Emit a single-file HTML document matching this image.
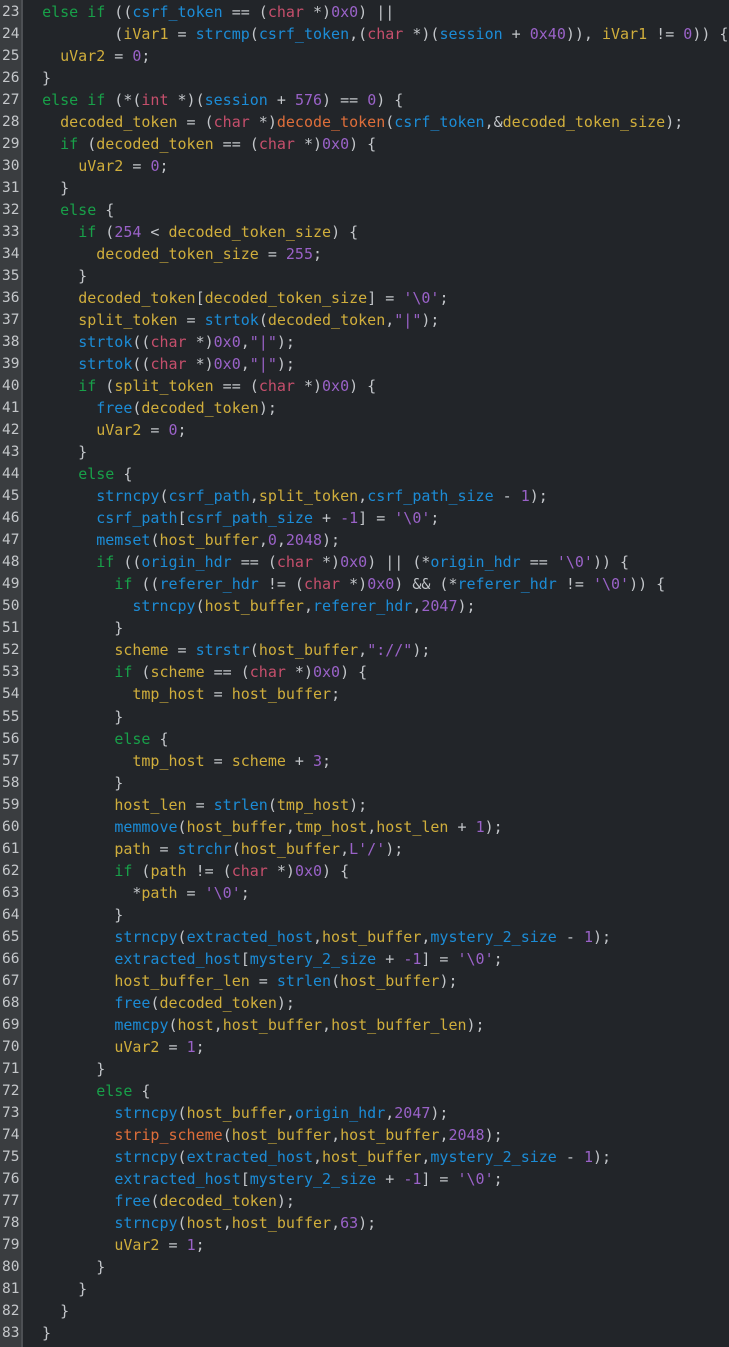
<!DOCTYPE html>
<html><head><meta charset="utf-8"><style>
html,body{margin:0;padding:0;background:#222529;width:729px;height:1347px;overflow:hidden}
.w{position:relative;padding-top:1px;font-family:"DejaVu Sans Mono","Liberation Mono",monospace;font-size:15px;line-height:22.03px;color:#c3c6ca}
.g{position:absolute;left:0;top:0;width:21px;height:1347px;background:#3a3d40;border-right:2px solid #4d5054}
.l{position:relative;height:22.03px;white-space:pre}
.n{position:absolute;left:2px;width:20px;color:#c4c7ca;font-size:14.5px}
.c{position:absolute;left:24px}
.y{color:#d0ae3c}.b{color:#1c8cd6}.k{color:#18a049}.t{color:#c64f6c}.p{color:#9a62c8}.o{color:#de6e3a}
</style></head><body><div class="w"><div class="g"></div>
<div class="l"><span class="n">23</span><span class="c">  <span class="k">else if</span> ((<span class="b">csrf_token</span> == (<span class="t">char</span> *)<span class="p">0x0</span>) ||</span></div>
<div class="l"><span class="n">24</span><span class="c">          (<span class="y">iVar1</span> = <span class="b">strcmp</span>(<span class="b">csrf_token</span>,(<span class="t">char</span> *)(<span class="b">session</span> + <span class="p">0x40</span>)), <span class="y">iVar1</span> != <span class="p">0</span>)) {</span></div>
<div class="l"><span class="n">25</span><span class="c">    <span class="y">uVar2</span> = <span class="p">0</span>;</span></div>
<div class="l"><span class="n">26</span><span class="c">  }</span></div>
<div class="l"><span class="n">27</span><span class="c">  <span class="k">else if</span> (*(<span class="t">int</span> *)(<span class="b">session</span> + <span class="p">576</span>) == <span class="p">0</span>) {</span></div>
<div class="l"><span class="n">28</span><span class="c">    <span class="y">decoded_token</span> = (<span class="t">char</span> *)<span class="o">decode_token</span>(<span class="b">csrf_token</span>,&amp;<span class="y">decoded_token_size</span>);</span></div>
<div class="l"><span class="n">29</span><span class="c">    <span class="k">if</span> (<span class="y">decoded_token</span> == (<span class="t">char</span> *)<span class="p">0x0</span>) {</span></div>
<div class="l"><span class="n">30</span><span class="c">      <span class="y">uVar2</span> = <span class="p">0</span>;</span></div>
<div class="l"><span class="n">31</span><span class="c">    }</span></div>
<div class="l"><span class="n">32</span><span class="c">    <span class="k">else</span> {</span></div>
<div class="l"><span class="n">33</span><span class="c">      <span class="k">if</span> (<span class="p">254</span> &lt; <span class="y">decoded_token_size</span>) {</span></div>
<div class="l"><span class="n">34</span><span class="c">        <span class="y">decoded_token_size</span> = <span class="p">255</span>;</span></div>
<div class="l"><span class="n">35</span><span class="c">      }</span></div>
<div class="l"><span class="n">36</span><span class="c">      <span class="y">decoded_token</span>[<span class="y">decoded_token_size</span>] = <span class="p">'\0'</span>;</span></div>
<div class="l"><span class="n">37</span><span class="c">      <span class="y">split_token</span> = <span class="b">strtok</span>(<span class="y">decoded_token</span>,<span class="p">"|"</span>);</span></div>
<div class="l"><span class="n">38</span><span class="c">      <span class="b">strtok</span>((<span class="t">char</span> *)<span class="p">0x0</span>,<span class="p">"|"</span>);</span></div>
<div class="l"><span class="n">39</span><span class="c">      <span class="b">strtok</span>((<span class="t">char</span> *)<span class="p">0x0</span>,<span class="p">"|"</span>);</span></div>
<div class="l"><span class="n">40</span><span class="c">      <span class="k">if</span> (<span class="y">split_token</span> == (<span class="t">char</span> *)<span class="p">0x0</span>) {</span></div>
<div class="l"><span class="n">41</span><span class="c">        <span class="b">free</span>(<span class="y">decoded_token</span>);</span></div>
<div class="l"><span class="n">42</span><span class="c">        <span class="y">uVar2</span> = <span class="p">0</span>;</span></div>
<div class="l"><span class="n">43</span><span class="c">      }</span></div>
<div class="l"><span class="n">44</span><span class="c">      <span class="k">else</span> {</span></div>
<div class="l"><span class="n">45</span><span class="c">        <span class="b">strncpy</span>(<span class="b">csrf_path</span>,<span class="y">split_token</span>,<span class="b">csrf_path_size</span> - <span class="p">1</span>);</span></div>
<div class="l"><span class="n">46</span><span class="c">        <span class="b">csrf_path</span>[<span class="b">csrf_path_size</span> + <span class="p">-1</span>] = <span class="p">'\0'</span>;</span></div>
<div class="l"><span class="n">47</span><span class="c">        <span class="b">memset</span>(<span class="y">host_buffer</span>,<span class="p">0</span>,<span class="p">2048</span>);</span></div>
<div class="l"><span class="n">48</span><span class="c">        <span class="k">if</span> ((<span class="b">origin_hdr</span> == (<span class="t">char</span> *)<span class="p">0x0</span>) || (*<span class="b">origin_hdr</span> == <span class="p">'\0'</span>)) {</span></div>
<div class="l"><span class="n">49</span><span class="c">          <span class="k">if</span> ((<span class="b">referer_hdr</span> != (<span class="t">char</span> *)<span class="p">0x0</span>) &amp;&amp; (*<span class="b">referer_hdr</span> != <span class="p">'\0'</span>)) {</span></div>
<div class="l"><span class="n">50</span><span class="c">            <span class="b">strncpy</span>(<span class="y">host_buffer</span>,<span class="b">referer_hdr</span>,<span class="p">2047</span>);</span></div>
<div class="l"><span class="n">51</span><span class="c">          }</span></div>
<div class="l"><span class="n">52</span><span class="c">          <span class="y">scheme</span> = <span class="b">strstr</span>(<span class="y">host_buffer</span>,<span class="p">"://"</span>);</span></div>
<div class="l"><span class="n">53</span><span class="c">          <span class="k">if</span> (<span class="y">scheme</span> == (<span class="t">char</span> *)<span class="p">0x0</span>) {</span></div>
<div class="l"><span class="n">54</span><span class="c">            <span class="y">tmp_host</span> = <span class="y">host_buffer</span>;</span></div>
<div class="l"><span class="n">55</span><span class="c">          }</span></div>
<div class="l"><span class="n">56</span><span class="c">          <span class="k">else</span> {</span></div>
<div class="l"><span class="n">57</span><span class="c">            <span class="y">tmp_host</span> = <span class="y">scheme</span> + <span class="p">3</span>;</span></div>
<div class="l"><span class="n">58</span><span class="c">          }</span></div>
<div class="l"><span class="n">59</span><span class="c">          <span class="y">host_len</span> = <span class="b">strlen</span>(<span class="y">tmp_host</span>);</span></div>
<div class="l"><span class="n">60</span><span class="c">          <span class="b">memmove</span>(<span class="y">host_buffer</span>,<span class="y">tmp_host</span>,<span class="y">host_len</span> + <span class="p">1</span>);</span></div>
<div class="l"><span class="n">61</span><span class="c">          <span class="y">path</span> = <span class="b">strchr</span>(<span class="y">host_buffer</span>,<span class="p">L'/'</span>);</span></div>
<div class="l"><span class="n">62</span><span class="c">          <span class="k">if</span> (<span class="y">path</span> != (<span class="t">char</span> *)<span class="p">0x0</span>) {</span></div>
<div class="l"><span class="n">63</span><span class="c">            *<span class="y">path</span> = <span class="p">'\0'</span>;</span></div>
<div class="l"><span class="n">64</span><span class="c">          }</span></div>
<div class="l"><span class="n">65</span><span class="c">          <span class="b">strncpy</span>(<span class="b">extracted_host</span>,<span class="y">host_buffer</span>,<span class="b">mystery_2_size</span> - <span class="p">1</span>);</span></div>
<div class="l"><span class="n">66</span><span class="c">          <span class="b">extracted_host</span>[<span class="b">mystery_2_size</span> + <span class="p">-1</span>] = <span class="p">'\0'</span>;</span></div>
<div class="l"><span class="n">67</span><span class="c">          <span class="y">host_buffer_len</span> = <span class="b">strlen</span>(<span class="y">host_buffer</span>);</span></div>
<div class="l"><span class="n">68</span><span class="c">          <span class="b">free</span>(<span class="y">decoded_token</span>);</span></div>
<div class="l"><span class="n">69</span><span class="c">          <span class="b">memcpy</span>(<span class="y">host</span>,<span class="y">host_buffer</span>,<span class="y">host_buffer_len</span>);</span></div>
<div class="l"><span class="n">70</span><span class="c">          <span class="y">uVar2</span> = <span class="p">1</span>;</span></div>
<div class="l"><span class="n">71</span><span class="c">        }</span></div>
<div class="l"><span class="n">72</span><span class="c">        <span class="k">else</span> {</span></div>
<div class="l"><span class="n">73</span><span class="c">          <span class="b">strncpy</span>(<span class="y">host_buffer</span>,<span class="b">origin_hdr</span>,<span class="p">2047</span>);</span></div>
<div class="l"><span class="n">74</span><span class="c">          <span class="o">strip_scheme</span>(<span class="y">host_buffer</span>,<span class="y">host_buffer</span>,<span class="p">2048</span>);</span></div>
<div class="l"><span class="n">75</span><span class="c">          <span class="b">strncpy</span>(<span class="b">extracted_host</span>,<span class="y">host_buffer</span>,<span class="b">mystery_2_size</span> - <span class="p">1</span>);</span></div>
<div class="l"><span class="n">76</span><span class="c">          <span class="b">extracted_host</span>[<span class="b">mystery_2_size</span> + <span class="p">-1</span>] = <span class="p">'\0'</span>;</span></div>
<div class="l"><span class="n">77</span><span class="c">          <span class="b">free</span>(<span class="y">decoded_token</span>);</span></div>
<div class="l"><span class="n">78</span><span class="c">          <span class="b">strncpy</span>(<span class="y">host</span>,<span class="y">host_buffer</span>,<span class="p">63</span>);</span></div>
<div class="l"><span class="n">79</span><span class="c">          <span class="y">uVar2</span> = <span class="p">1</span>;</span></div>
<div class="l"><span class="n">80</span><span class="c">        }</span></div>
<div class="l"><span class="n">81</span><span class="c">      }</span></div>
<div class="l"><span class="n">82</span><span class="c">    }</span></div>
<div class="l"><span class="n">83</span><span class="c">  }</span></div>
</div></body></html>
